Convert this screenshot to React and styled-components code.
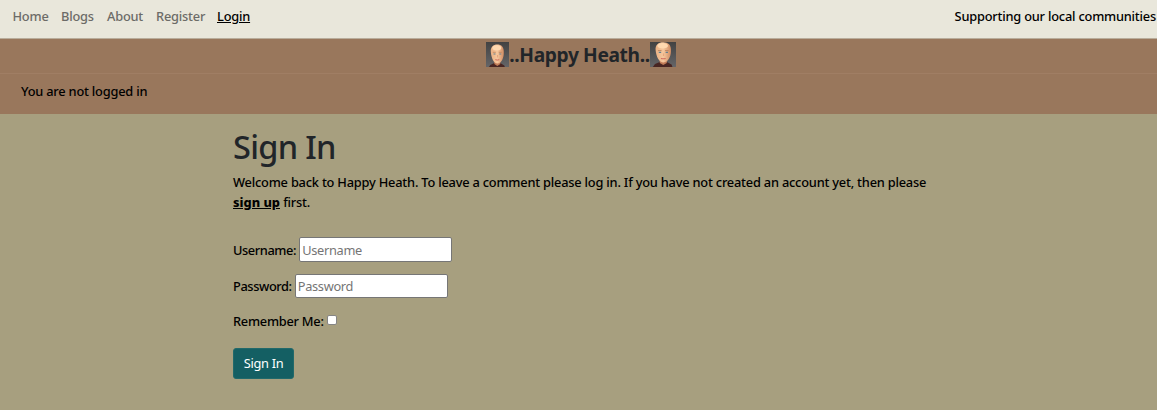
import React from 'react';
import styled, { createGlobalStyle } from 'styled-components';

const GlobalStyle = createGlobalStyle`
  *, *::before, *::after { box-sizing: border-box; }
  body {
    margin: 0;
    background: #a79f7f;
    color: #000;
    font-family: "Noto Sans", "Open Sans", sans-serif;
    font-size: 12.8px;
    font-weight: 500;
    letter-spacing: -0.2px;
    line-height: 20px;
    overflow: hidden;
  }
`;

const Nav = styled.nav`
  display: flex;
  justify-content: space-between;
  height: 39px;
  padding: 6px 1px 0 12.5px;
  background: #e9e7db;
  border-bottom: 1px solid #b9ad9b;
`;

const NavLinks = styled.div`
  display: flex;
  gap: 13px;
`;

const NavLink = styled.a`
  width: ${(p) => p.$width}px;
  white-space: nowrap;
  color: ${(p) => (p.$active ? '#000' : '#6c6b67')};
  text-decoration: ${(p) => (p.$active ? 'underline' : 'none')};
`;

const Tagline = styled.span`
  white-space: nowrap;
`;

const Banner = styled.header`
  display: flex;
  justify-content: center;
  height: 35px;
  padding: 3px 0 0 5px;
  background: #99775c;
  border-bottom: 1px solid #a07e64;
`;

const SiteName = styled.h1`
  margin: 0;
  font-size: 19.2px;
  font-weight: 700;
  line-height: 26px;
  letter-spacing: -0.37px;
  color: #212529;
`;

const Portrait = styled.svg`
  display: block;
  width: ${(p) => p.$width}px;
  height: 25px;
`;

const Status = styled.div`
  height: 40px;
  padding: 7px 21px;
  background: #99775c;
`;

const Main = styled.main`
  width: 710px;
  margin-left: 233px;
  padding-top: 13px;
`;

const Title = styled.h2`
  margin: 0 0 6px;
  font-size: 32.500px;
  font-weight: 500;
  line-height: 39px;
  letter-spacing: -0.7px;
  color: #212529;
`;

const Intro = styled.p`
  margin: 0 0 25px;
`;

const SignUp = styled.a`
  color: #000;
  font-weight: 800;
  letter-spacing: 0;
  text-decoration: underline;
`;

const Field = styled.div`
  display: flex;
  align-items: flex-start;
  gap: 3px;
  height: 25px;
  margin-bottom: ${(p) => p.$after}px;
`;

const Label = styled.label`
  padding-top: ${(p) => p.$top}px;
  letter-spacing: ${(p) => (p.$tight ? '-0.4px' : '-0.25px')};
`;

const Input = styled.input`
  width: 153px;
  height: ${(p) => p.$height}px;
  padding: 0 2px;
  border: 1px solid #767676;
  border-radius: 2px;
  background: #fff;
  font: 400 12.8px "Noto Sans", sans-serif;
  letter-spacing: -0.3px;
  &::placeholder { color: #757575; }
`;

const Checkbox = styled.input`
  appearance: none;
  width: 10px;
  height: 10px;
  margin: 6px 0 0;
  border: 1px solid #858585;
  border-radius: 2px;
  background: #fff;
`;

const Submit = styled.button`
  width: 61px;
  height: 31px;
  padding: 0 0 1px;
  border: 1px solid #21696a;
  border-radius: 3px;
  background: #145f63;
  color: #fff;
  font: 400 12.8px "Noto Sans", sans-serif;
  letter-spacing: -0.3px;
`;

function Face({ id, width, large }) {
  return (
    <Portrait $width={width} viewBox={`0 0 ${width} 25`} aria-hidden="true">
      <defs>
        <linearGradient id={`${id}-bg`} x2="0" y2="1">
          <stop stopColor="#424242" />
          <stop offset="1" stopColor="#656567" />
        </linearGradient>
        <linearGradient id={`${id}-skin`}>
          <stop stopColor="#eab083" />
          <stop offset=".5" stopColor="#f6c79d" />
          <stop offset="1" stopColor="#cf8b62" />
        </linearGradient>
      </defs>
      <rect width={width} height="25" fill={`url(#${id}-bg)`} />
      <g transform={large ? 'translate(.3 -1.3) scale(1.18 1.06)' : 'translate(.3 1)'}>
        <path d="M2 25 4 22 8 20h6l4 2.500 1 3z" fill="#482522" />
        <path d="M8 16h6v5l-3 2-3-2z" fill="#c27c58" />
        <path d="M4.500 9C4 4 7 1.500 11 1.500S18 4 17.500 10c0 5-2.500 10.500-6.300 10.500S5 15 4.500 9z" fill={`url(#${id}-skin)`} />
        <ellipse cx="10.500" cy="4.800" rx="4.500" ry="2.600" fill="#ffd9b0" />
        <path d="M6.500 9.300h3m3 0h3" stroke="#b57c58" strokeWidth=".7" />
        <path d="M7.200 11h2m3.800 0h2" stroke="#66808e" strokeWidth="1.100" />
        <path d="M11.200 12v2.500" stroke="#e5a67e" strokeWidth="1" fill="none" />
        <path d="M9 16.700q2 .8 4 0" stroke="#cf6a5c" strokeWidth="1" fill="none" />
      </g>
    </Portrait>
  );
}

export default function App() {
  return (
    <>
      <GlobalStyle />
      <Nav>
        <NavLinks>
          <NavLink $width={35.5}>Home</NavLink>
          <NavLink $width={33}>Blogs</NavLink>
          <NavLink $width={36}>About</NavLink>
          <NavLink $width={48}>Register</NavLink>
          <NavLink $width={33} $active>Login</NavLink>
        </NavLinks>
        <Tagline>Supporting our local communities</Tagline>
      </Nav>
      <Banner>
        <Face id="left" width={23} />
        <SiteName>..Happy Heath..</SiteName>
        <Face id="right" width={26} large />
      </Banner>
      <Status>You are not logged in</Status>
      <Main>
        <Title>Sign In</Title>
        <Intro>
          Welcome back to Happy Heath. To leave a comment please log in. If you have not created an account yet, then please{' '}
          <SignUp>sign up</SignUp> first.
        </Intro>
        <Field $after={12}>
          <Label $tight $top={3} htmlFor="username">Username:</Label>
          <Input $height={25} id="username" placeholder="Username" />
        </Field>
        <Field $after={10}>
          <Label $tight $top={2} htmlFor="password">Password:</Label>
          <Input $height={24} id="password" type="password" placeholder="Password" />
        </Field>
        <Field $after={14}>
          <Label $top={2} htmlFor="remember">Remember Me:</Label>
          <Checkbox id="remember" type="checkbox" />
        </Field>
        <Submit>Sign In</Submit>
      </Main>
    </>
  );
}
